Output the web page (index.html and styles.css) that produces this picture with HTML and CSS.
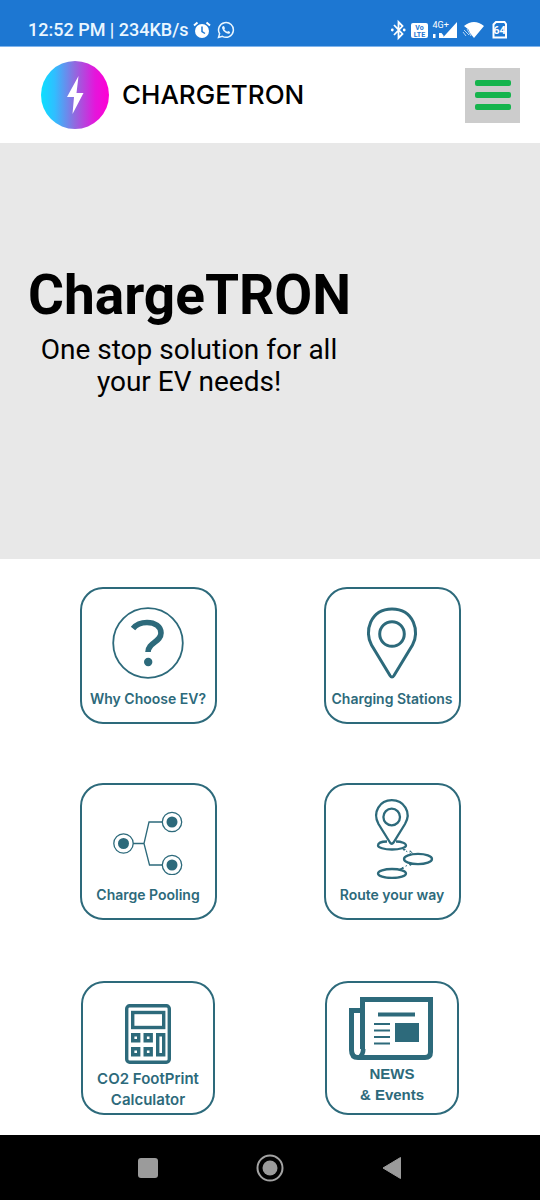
FILE: index.html
```html
<!DOCTYPE html>
<html lang="en">
<head>
<meta charset="utf-8">
<meta name="viewport" content="width=device-width, initial-scale=1">
<title>ChargeTRON</title>
<link rel="stylesheet" href="styles.css">
</head>
<body>
<div class="status">
  <div class="status-side">
    <span>12:52 PM | 234KB/s</span>
    <svg width="18" height="18" viewBox="0 0 18 18" fill="none" stroke="#fff" aria-label="Alarm">
      <circle cx="9" cy="10" r="7" fill="#fff" stroke="none"/>
      <path d="M1 4.5 4.5 1.5M17 4.5 13.500 1.500" stroke-width="2"/>
      <path d="M9 5.500V10.500L12 12.500" stroke="#1d77d2" stroke-width="1.500"/>
    </svg>
    <svg class="chat" width="18" height="18" viewBox="0 0 18 18" fill="none" stroke="#eaf6ff" aria-label="Messages">
      <path d="M1.500 16.500 2.600 12.700A7.400 7.400 0 1 1 5.400 15.400Z" stroke-width="1.500"/>
      <path d="M5.800 5.200 7 5 8 7.200 7.300 8.200Q8.300 10 10.200 10.800L11.200 9.900 13.200 10.900 12.800 12.300Q11.500 13.500 9 12 5.500 10 5 7 5 5.800 5.800 5.200Z" fill="#eaf6ff" stroke="none"/>
    </svg>
  </div>
  <svg width="118" height="22" viewBox="0 0 118 22" fill="#fff" aria-label="Bluetooth, VoLTE, 4G+, Wi-Fi, battery 64">
    <path d="M4 6 12.500 15 8.500 19V3L12.500 7 4 16" fill="none" stroke="#fff" stroke-width="1.800"/>
    <circle cx="2.300" cy="11" r="1.400"/><circle cx="14.200" cy="11" r="1.400"/>
    <rect x="21" y="4" width="17" height="15" rx="2"/>
    <text class="tiny" x="29.500" y="11" text-anchor="middle">Vo</text>
    <text class="tiny" x="29.500" y="17.500" text-anchor="middle">LTE</text>
    <text class="net" x="42.500" y="9">4G+</text>
    <path d="M43 15h2.500V19H43zM49 14h2.500L53.500 16.500V19H49zM67 3V19H52.500Z"/>
    <path d="M74 7Q84 -1 94 7L84 19 80 14 78.500 10.500Z"/>
    <path d="M74 11 79 16M77 10 81 17M73 13 76 17" stroke="#b5d5f5" stroke-width="1"/>
    <path d="M106 3H114.500L116 5V18.500H103.500V5.500Z" fill="none" stroke="#fff" stroke-width="2"/>
    <text class="level" x="109.500" y="15" text-anchor="middle">64</text>
  </svg>
</div>

<header class="header">
  <a class="brand" href="#">
    <svg width="68" height="68" viewBox="0 0 68 68" aria-hidden="true">
      <defs><linearGradient id="bolt"><stop offset="0" stop-color="#0be0ff"/><stop offset=".2" stop-color="#30beff"/><stop offset=".5" stop-color="#9269df"/><stop offset=".8" stop-color="#e515db"/><stop offset="1" stop-color="#ff00d4"/></linearGradient></defs>
      <circle cx="34" cy="34" r="34" fill="url(#bolt)"/>
      <path d="M37.500 15 26 36H33L31.500 53 42.500 32H35.500Z" fill="#fff"/>
    </svg>
    <span class="wordmark">CHARGETRON</span>
  </a>
  <button class="menu" type="button" aria-label="Menu"><i></i><i></i><i></i></button>
</header>

<main>
  <section class="hero">
    <div class="hero-text">
      <h1>ChargeTRON</h1>
      <p>One stop solution for all your EV needs!</p>
    </div>
  </section>

  <nav class="grid">
    <a class="card" href="#">
      <svg width="72" height="72" viewBox="0 0 72 72" fill="none" stroke="#2d6a7b" aria-hidden="true">
        <circle cx="36" cy="36" r="34.800" stroke-width="1.800"/>
        <path d="M21 21.500C25 16.500 30 15.500 35 15.500C43 15.500 49 19.500 49 26C49 35 36 35.500 36 45" stroke-width="5.600"/>
        <circle cx="36.200" cy="55" r="4.200" fill="#2d6a7b" stroke="none"/>
      </svg>
      <span class="label">Why Choose EV?</span>
    </a>
    <a class="card" href="#">
      <svg width="72" height="72" viewBox="0 0 72 72" fill="none" stroke="#2d6a7b" stroke-width="3" aria-hidden="true">
        <path d="M34 68.500 15.500 38C8 25 14 2 36 2S64 25 56.500 38L38 68.500Q36 71.500 34 68.500Z"/>
        <circle cx="36" cy="27" r="12.300"/>
      </svg>
      <span class="label">Charging Stations</span>
    </a>
    <a class="card" href="#">
      <svg width="72" height="72" viewBox="0 0 72 72" fill="none" stroke="#2d6a7b" stroke-width="1.300" aria-hidden="true">
        <path d="M21 40.500H32L37 19H50M32 40.500 37.500 62H50"/>
        <circle cx="11.500" cy="40.500" r="9.700"/><circle cx="60" cy="19" r="9.700"/><circle cx="60" cy="62" r="9.700"/>
        <g fill="#2d6a7b" stroke="none"><circle cx="11.500" cy="40.500" r="5.500"/><circle cx="60" cy="19" r="5.500"/><circle cx="60" cy="62" r="5.500"/></g>
      </svg>
      <span class="label">Charge Pooling</span>
    </a>
    <a class="card route" href="#">
      <svg width="84" height="80" viewBox="0 0 84 80" fill="none" stroke="#2d6a7b" stroke-width="2.300" aria-hidden="true">
        <path d="M40 43.500 28.500 25C22 13 30 1.200 41.800 1.200S62 13 55 25L43.500 43.500Q41.700 46 40 43.500Z"/>
        <circle cx="41.700" cy="18" r="8.300"/>
        <path d="M37 42.500C31 42.500 28 44.500 28 46.500S34 50.500 42 50.500 56 48.500 56 46.500 52 42.500 46 42.500"/>
        <ellipse cx="68" cy="60" rx="14" ry="5.200"/><ellipse cx="42" cy="74.500" rx="14" ry="4.500"/>
        <path d="M56 52 63 56M52 69 60 65" stroke-dasharray="1.500 2.500" stroke-width="1"/>
        <path d="M52 49.500 56 50 54 52ZM59 52 60.500 51.500 64 55.500ZM53 68 54 70 47 71ZM59 64.500 60 67 64 64.500Z" fill="#2d6a7b" stroke="none"/>
      </svg>
      <span class="label">Route your way</span>
    </a>
    <a class="card small" href="#">
      <svg width="46" height="60" viewBox="0 0 46 60" fill="none" stroke="#2d6a7b" stroke-width="3.400" aria-hidden="true">
        <rect x="1.700" y="1.700" width="42.600" height="56.600" rx="3"/>
        <rect x="7.700" y="8.500" width="31" height="15"/>
        <path d="M7.700 30.700h6v6h-6zM20.200 30.700h6v6h-6zM7.700 44.700h6v6h-6zM20.200 44.700h6v6h-6zM32.700 30.700h6v20h-6z"/>
      </svg>
      <span class="label co2">CO2 FootPrint<br>Calculator</span>
    </a>
    <a class="card small news" href="#">
      <svg width="86" height="64" viewBox="0 0 86 64" fill="none" stroke="#2d6a7b" stroke-width="5" aria-hidden="true">
        <path d="M13.500 52V2.500H81.500V55Q81.500 60.500 76 60.500H9Q2.500 60.500 2.500 53V13.500H13.500"/>
        <path d="M13.500 50Q13.500 60 8 60M15 52Q15 57 12 60" stroke-width="3"/>
        <path d="M29 17.500H66" stroke-width="4"/>
        <path d="M25 27H41M25 33.500H41M25 40H41M25 46.500H41" stroke-width="2.200"/>
        <path d="M46 26H70V45H46Z" fill="#2d6a7b" stroke="none"/>
      </svg>
      <span class="label events">NEWS<br>&amp; Events</span>
    </a>
  </nav>
</main>

<footer class="system">
  <button type="button" aria-label="Recent apps"><svg width="28" height="28" viewBox="0 0 28 28"><rect x="4" y="4" width="20" height="20" rx="3" fill="#9b9b9b"/></svg></button>
  <button type="button" aria-label="Home"><svg width="28" height="28" viewBox="0 0 28 28"><circle cx="14" cy="14" r="12.500" fill="none" stroke="#a3a3a3" stroke-width="2"/><circle cx="14" cy="14" r="7.500" fill="#9b9b9b"/></svg></button>
  <button type="button" aria-label="Back"><svg width="28" height="28" viewBox="0 0 28 28"><path d="M5 14 22.500 3.500V24.500Z" fill="#9b9b9b" stroke="#9b9b9b" stroke-linejoin="round"/></svg></button>
</footer>
</body>
</html>
```

FILE: styles.css
```css
* { box-sizing: border-box; }

body {
  margin: 0;
  min-height: 100vh;
  display: flex;
  flex-direction: column;
  background: #fff;
  color: #000;
  font-family: Roboto, "Liberation Sans", sans-serif;
}

a { color: inherit; text-decoration: none; }
svg { display: block; flex: none; }

button {
  padding: 0;
  border: 0;
  background: none;
  cursor: pointer;
}

.status {
  display: flex;
  justify-content: space-between;
  align-items: center;
  padding: 18px 32px 4px 28px;
  border-bottom: 1px solid #7fb4ec;
  background: #1d77d2;
  color: #eaf6ff;
  font-size: 18px;
  font-weight: 500;
  line-height: 24px;
}

.status-side { display: flex; align-items: center; gap: 4px; }
.chat { margin-left: 2px; }
.tiny { font-size: 7px; font-weight: 700; fill: #1d77d2; }
.net { font-size: 9px; font-weight: 400; }
.level { font-size: 11px; font-weight: 700; }

.header {
  display: flex;
  justify-content: space-between;
  align-items: center;
  padding: 14px 20px 14px 41px;
}

.brand { display: flex; align-items: center; gap: 13px; }
.wordmark { font-family: Inter, sans-serif; font-size: 26px; font-weight: 500; line-height: 32px; }

.menu {
  display: flex;
  flex-direction: column;
  align-items: center;
  justify-content: center;
  gap: 6px;
  width: 55px;
  height: 55px;
  background: #ccc;
}

.menu i { width: 36px; height: 6px; border-radius: 2px; background: #15b44d; }

.hero { padding: 120px 28px 161px; background: #e8e8e8; }
.hero-text { max-width: 322px; text-align: center; }
.hero h1 { margin: 0; font-size: 55px; font-weight: 700; line-height: 64px; }
.hero p { margin: 7px 0 0; font-size: 28px; line-height: 32px; }

.grid {
  display: grid;
  grid-template-columns: 1fr 1fr;
  grid-auto-rows: 137px;
  row-gap: 59px;
  place-items: center;
  padding: 28px 26px 19px;
}

.card {
  display: flex;
  flex-direction: column;
  align-items: center;
  justify-content: flex-end;
  gap: 10px;
  width: 137px;
  height: 137px;
  padding-bottom: 13px;
  border: 2px solid #2d6a7b;
  border-radius: 23px;
  color: #2d6a7b;
  white-space: nowrap;
}

.route { gap: 6px; }
.small { width: 134px; height: 134px; gap: 4px; padding-bottom: 3px; }
.news { gap: 2px; padding-bottom: 8px; }

.label {
  font-family: Inter, sans-serif;
  font-size: 14px;
  font-weight: 600;
  line-height: 20px;
  text-align: center;
}

.co2 { font-size: 15px; line-height: 21px; }
.events { font-family: "Liberation Sans", sans-serif; font-size: 15px; font-weight: 700; line-height: 21px; }

.system {
  display: flex;
  justify-content: center;
  align-items: center;
  gap: 94px;
  flex: 1 0 65px;
  background: #000;
}
```
